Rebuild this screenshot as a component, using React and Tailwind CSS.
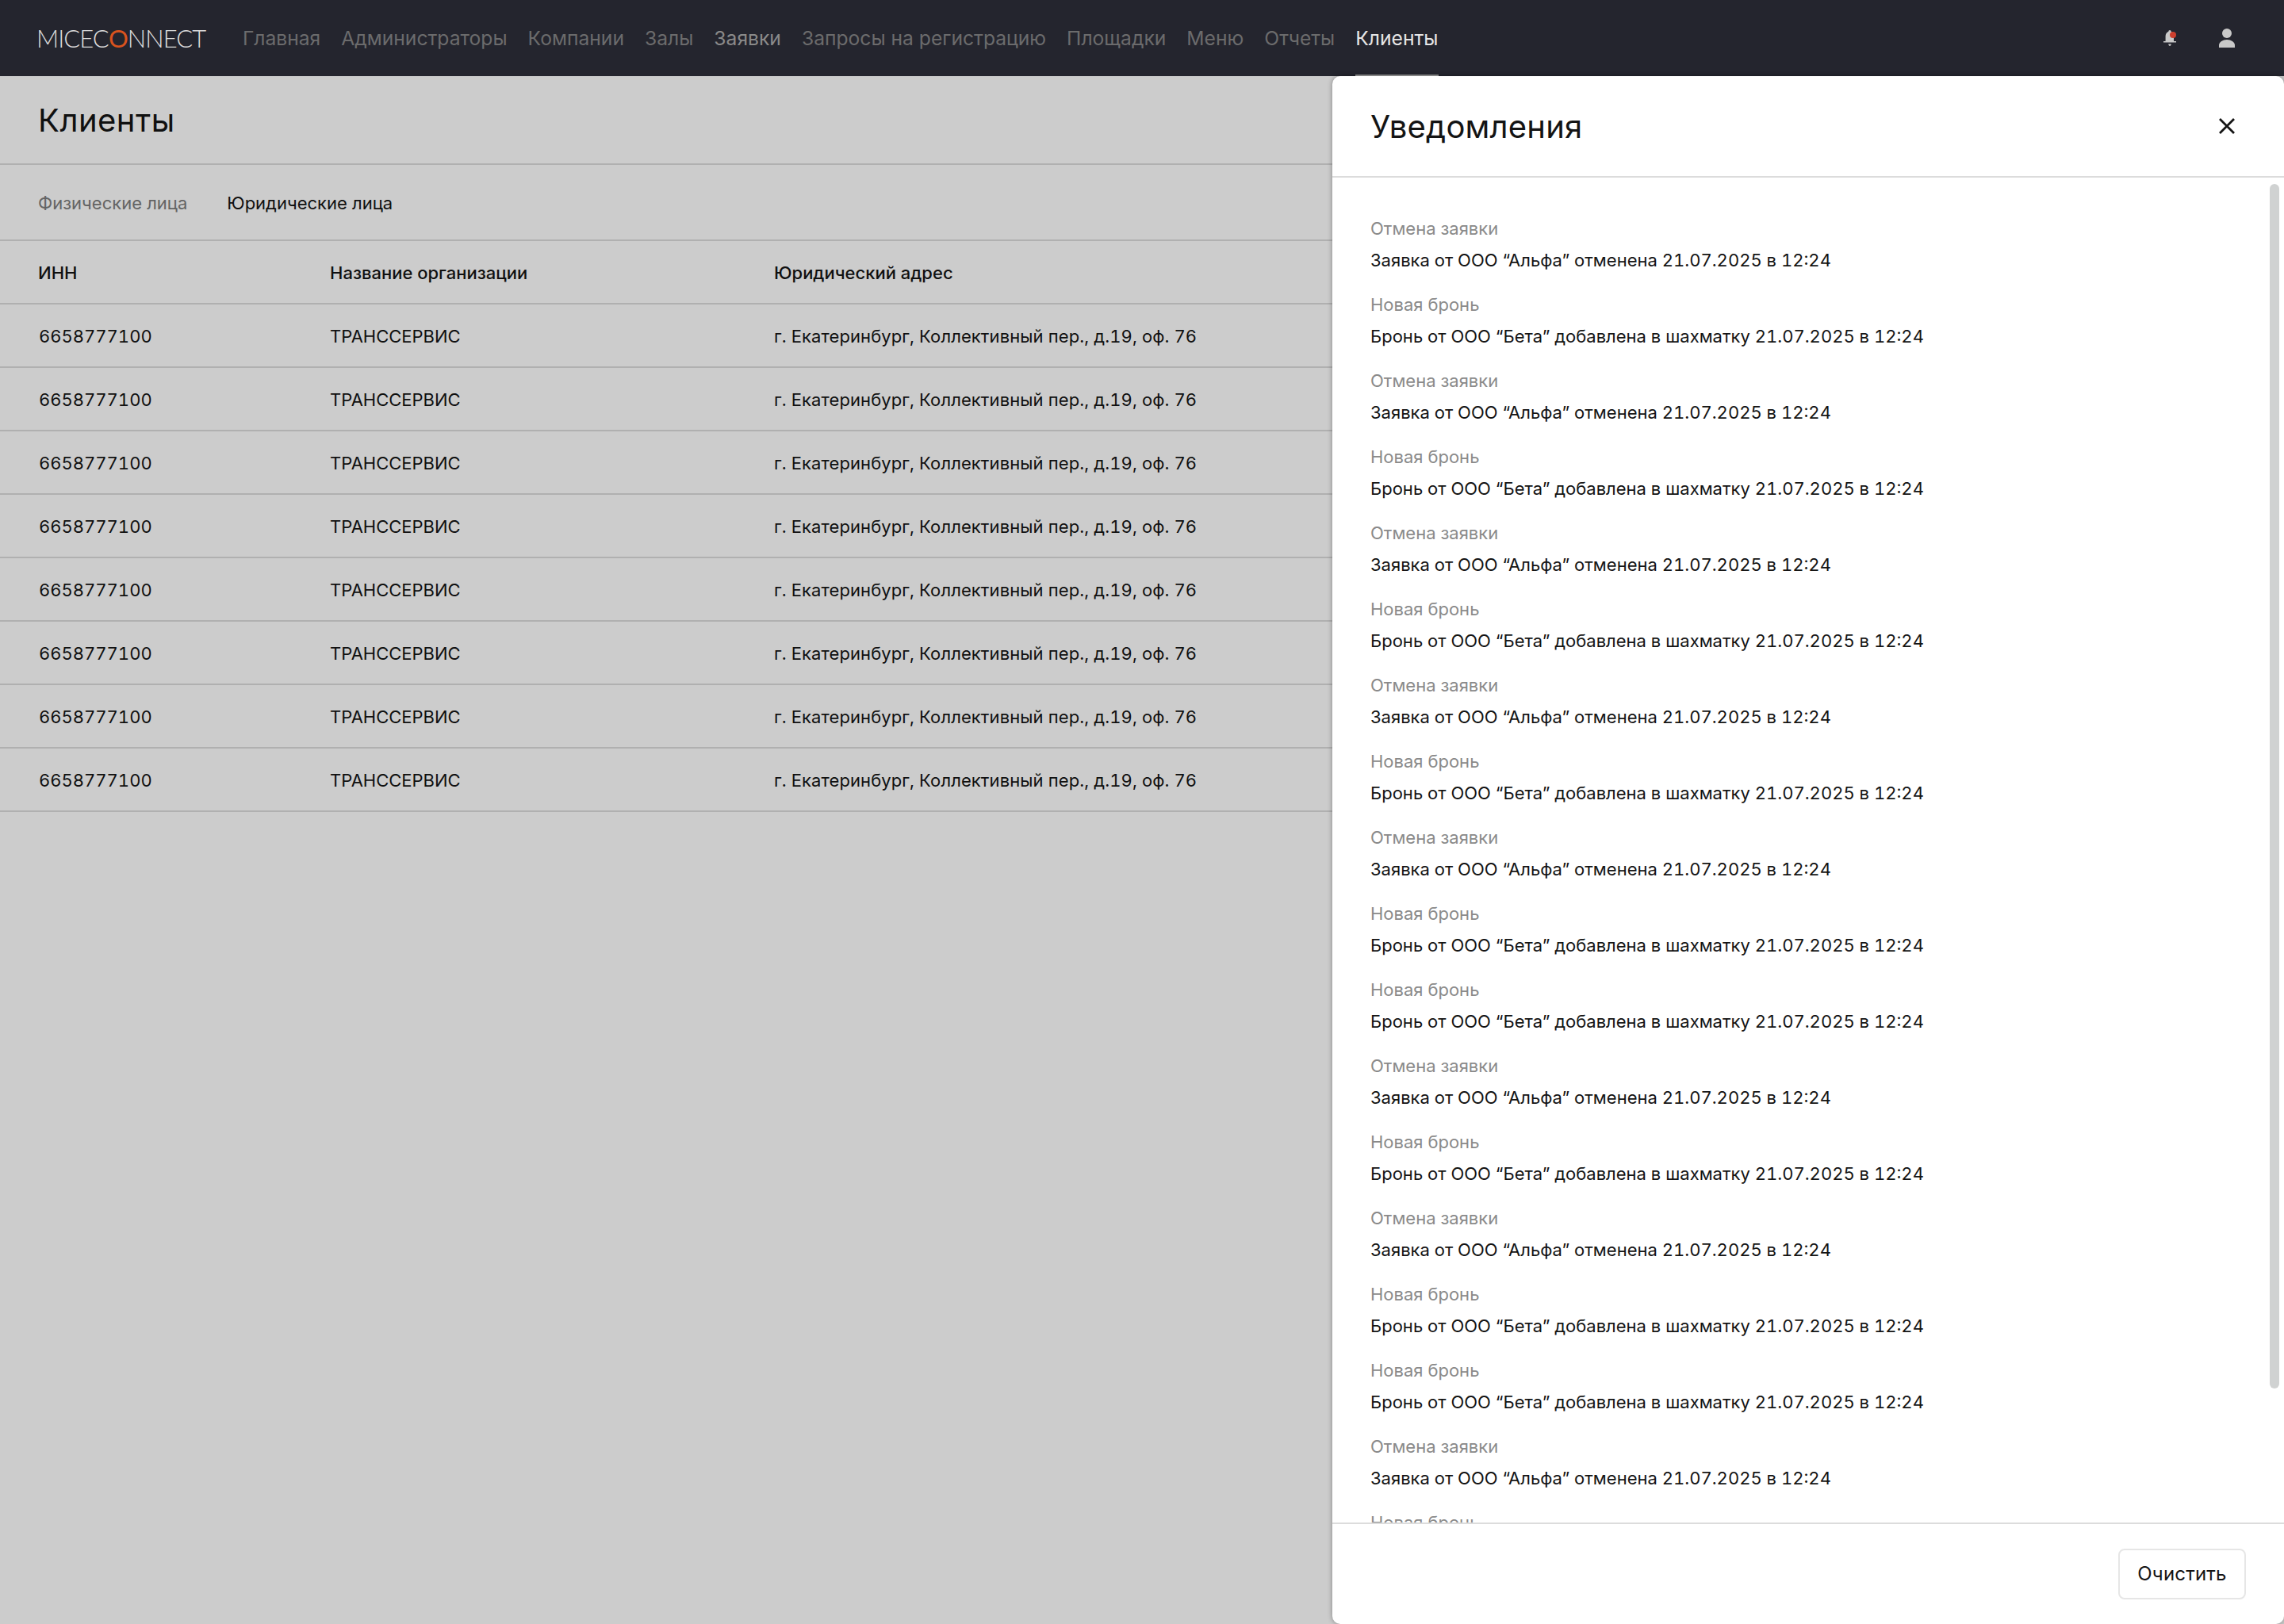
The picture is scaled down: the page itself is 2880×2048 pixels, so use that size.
import React from 'react';

const navItems = ['Главная', 'Администраторы', 'Компании', 'Залы', 'Заявки', 'Запросы на регистрацию', 'Площадки', 'Меню', 'Отчеты', 'Клиенты'];

const cancelItem = { title: 'Отмена заявки', text: 'Заявка от ООО “Альфа” отменена 21.07.2025 в 12:24' };
const bookingItem = { title: 'Новая бронь', text: 'Бронь от ООО “Бета” добавлена в шахматку 21.07.2025 в 12:24' };

const notifications = [
  cancelItem, bookingItem, cancelItem, bookingItem, cancelItem, bookingItem, cancelItem, bookingItem, cancelItem,
  bookingItem, bookingItem, cancelItem, bookingItem, cancelItem, bookingItem, bookingItem, cancelItem, bookingItem,
];

const rows = Array.from({ length: 8 }, () => ({
  inn: '6658777100',
  name: 'ТРАНССЕРВИС',
  address: 'г. Екатеринбург, Коллективный пер., д.19, оф. 76',
}));

const navColor = (item) => {
  if (item === 'Клиенты') return 'text-[#e6e6e6] border-b-[#9a9a9a]';
  if (item === 'Заявки') return 'text-[#8a8a8a] border-b-transparent';
  return 'text-[#6b6b6c] border-b-transparent';
};

const Header = () => (
  <header className="h-24 shrink-0 bg-[#24252e] flex items-center pl-[46px] pr-[62px]">
    <div className="w-[260px] shrink-0 font-['Lato',sans-serif] font-light text-[31px] tracking-[-0.95px] text-[#dcdcdc] whitespace-nowrap">
      MICEC<span className="font-normal text-[#d9531e]">O</span>NNECT
    </div>
    <nav className="flex h-full gap-[26px] text-[24.65px]">
      {navItems.map((item) => (
        <div key={item} className={`flex items-center border-y-2 border-t-transparent ${navColor(item)}`}>
          {item}
        </div>
      ))}
    </nav>
    <div className="ml-auto flex items-center gap-[54px]">
      <div className="relative w-4 h-5">
        <svg viewBox="0 0 16 20" className="w-4 h-5" fill="#c9c9c9">
          <path d="M8 0c1 0 1.600.8 1.600 1.700C12 2.600 13 5 13 7.500V14h3v1.500H0V14h2.600V7.500C2.600 5 4 2.600 6.400 1.700 6.400.8 7 0 8 0z" />
          <path d="M6.200 17.500h3.600C9.600 18.800 8.900 20 8 20s-1.600-1.200-1.800-2.500z" />
        </svg>
        <span className="absolute top-[2px] right-0 w-2 h-2 rounded-full bg-[#cc3f2e]" />
      </div>
      <svg viewBox="0 0 20 24" className="w-5 h-6" fill="#c9c9c9">
        <circle cx="10" cy="6" r="6" />
        <path d="M0 24v-3c0-4 5-7 10-7s10 3 10 7v3H0z" />
      </svg>
    </div>
  </header>
);

const ClientsPage = () => (
  <main className="flex-1 bg-white">
    <div className="h-[112px] border-b-2 border-[#dcdcdc] pl-12 flex items-center">
      <h1 className="text-[40px] tracking-[0.5px] font-normal text-[#141414] pt-[1px]">Клиенты</h1>
    </div>
    <div className="h-24 border-b-2 border-[#dcdcdc] pl-12 flex items-center gap-[50px] text-[22px] pt-[2px]">
      <span className="text-[#7d7d7d]">Физические лица</span>
      <span className="text-[#141414]">Юридические лица</span>
    </div>
    <div className="h-20 border-b-2 border-[#dcdcdc] flex items-center pl-12 pt-[2px] text-[22px] font-medium text-[#141414]">
      <div className="w-[368px]">ИНН</div>
      <div className="w-[560px]">Название организации</div>
      <div>Юридический адрес</div>
    </div>
    {rows.map((row, i) => (
      <div key={i} className="h-20 border-b-2 border-[#dcdcdc] flex items-center pl-[49px] pt-[2px] text-[22px] tabular-nums text-[#141414]">
        <div className="w-[367px]">{row.inn}</div>
        <div className="w-[560px]">{row.name}</div>
        <div className="tracking-[0.1px]">{row.address}</div>
      </div>
    ))}
  </main>
);

const NotificationsPanel = () => (
  <aside className="absolute top-24 right-0 bottom-0 w-[1200px] bg-white rounded-[10px] shadow-[0_0_6px_rgba(0,0,0,0.35)] flex flex-col">
    <div className="h-[128px] shrink-0 border-b-2 border-[#dcdcdc] pl-12 pr-[62px] flex items-center justify-between">
      <h2 className="text-[40px] tracking-[0.2px] font-normal text-[#141414] pt-[1px]">Уведомления</h2>
      <svg viewBox="0 0 20 20" className="w-5 h-5" stroke="#141414" strokeWidth="2.8" strokeLinecap="square">
        <path d="M2 2l16 16M18 2L2 18" />
      </svg>
    </div>
    <div className="relative flex-1 overflow-hidden pl-12 pt-[50px]">
      <div className="flex flex-col gap-[28px]">
        {notifications.map((item, i) => (
          <div key={i} className="flex flex-col gap-[12px] text-[22px] leading-[28px] tabular-nums">
            <div className="text-[#8a8a8a]">{item.title}</div>
            <div className="text-[#141414]">{item.text}</div>
          </div>
        ))}
      </div>
      <div className="absolute top-2 right-[6px] w-3 h-[1519px] rounded-full bg-[#d0d2d2]" />
    </div>
    <div className="h-[128px] shrink-0 border-t-2 border-[#dcdcdc] flex items-center justify-end pr-12">
      <button className="w-[161px] h-16 rounded-lg border-2 border-[#e6e6e6] bg-white text-[24px] tracking-[0.2px] text-[#141414]">Очистить</button>
    </div>
  </aside>
);

export default function App() {
  return (
    <div className="relative h-screen overflow-hidden flex flex-col font-['Inter',sans-serif]">
      <Header />
      <ClientsPage />
      {/* overlay under the drawer */}
      <div className="absolute inset-x-0 top-24 bottom-0 bg-black/20" />
      <NotificationsPanel />
    </div>
  );
}
